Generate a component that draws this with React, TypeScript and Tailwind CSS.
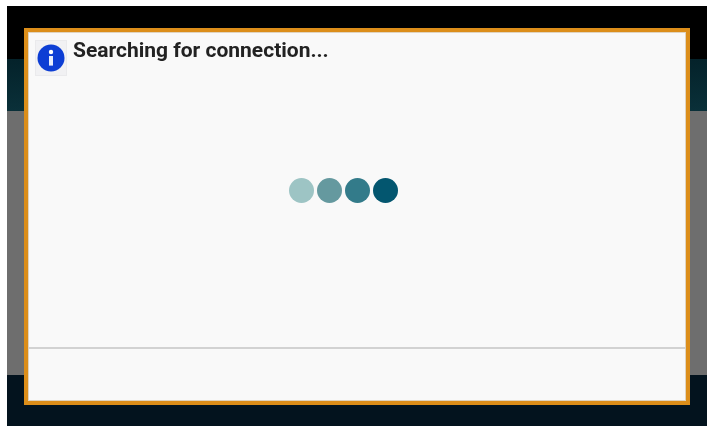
export default function App() {
  const dots = ['bg-[#9dc4c4]', 'bg-[#65999f]', 'bg-[#337b8a]', 'bg-[#03566f]'];

  return (
    <div className="w-[707px] h-[429px] bg-white pt-[6px] pb-[3px] pl-[7px] overflow-hidden font-['Roboto',sans-serif]">
      <div className="relative w-full h-full flex flex-col">
        {/* Screen behind the dialog */}
        <div className="h-[53px] bg-black"></div>
        <div className="h-[52px] bg-gradient-to-b from-[#04222a] to-[#0a3039]"></div>
        <div className="flex-1 bg-[#6e6e6e]"></div>
        <div className="h-[51px] bg-[#03131e]"></div>

        {/* Dialog */}
        <div className="absolute left-[17px] top-[22px] w-[666px] h-[377px] border-[4px] border-[#dc8e1a] bg-[#f9f9f9] flex flex-col">
          <div className="flex-1 flex flex-col border-t border-l border-r border-[#e0d4c0]">
            <div className="flex items-start pl-[6px] pt-[7px]">
              <div className="w-[32px] h-[36px] bg-[#f1f1f3] border border-[#eaeaec] flex items-center justify-center">
                <svg width="28" height="28" viewBox="0 0 28 28" className="blur-[0.5px]">
                  <circle cx="14" cy="14" r="13.5" fill="#0d3ed4" />
                  <circle cx="14" cy="8" r="2.2" fill="#ffffff" />
                  <path d="M12 12h4v9.6h-4z" fill="#e8eefc" />
                </svg>
              </div>
              <div className="ml-[6px] -mt-[2px] text-[21px] leading-[24px] font-bold text-[#222222] blur-[0.5px] whitespace-nowrap">
                Searching for connection...
              </div>
            </div>
            <div className="flex-1 flex items-start justify-center pt-[102px]">
              <div className="flex gap-[3px] -ml-[28px] blur-[0.5px]">
                {dots.map((color) => (
                  <div key={color} className={`w-[25px] h-[25px] rounded-full ${color}`}></div>
                ))}
              </div>
            </div>
          </div>
          <div className="h-[54px] border-x border-b border-t-2 border-x-[#e0d4c0] border-b-[#e0d4c0] border-t-[#d2d2d2]"></div>
        </div>
      </div>
    </div>
  );
}
